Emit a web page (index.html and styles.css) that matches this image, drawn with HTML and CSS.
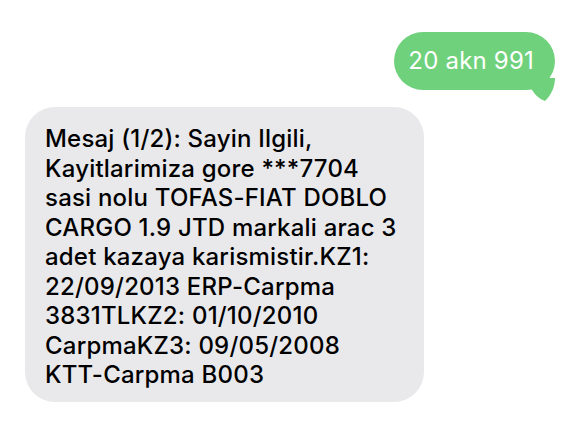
FILE: index.html
```html
<!DOCTYPE html>
<html lang="tr">
<head>
    <meta charset="UTF-8">
    <meta name="viewport" content="width=device-width, initial-scale=1.0">
    <title>Mesajlar</title>
    <link rel="stylesheet" href="styles.css">
</head>
<body>
    <div class="thread">
        <!-- giden mesaj -->
        <div class="bubble bubble-out">
            20 akn 991
            <svg class="tail" width="24" height="24" viewBox="0 0 24 24">
                <path d="M0 0 L24 0 C24 9 20 17 14 23 C8 21 3 16 0 10 Z" fill="#6fd17b"/>
            </svg>
        </div>

        <!-- gelen mesaj -->
        <div class="bubble bubble-in">Mesaj (1/2): Sayin Ilgili,<br>Kayitlarimiza gore ***7704<br>sasi nolu TOFAS-FIAT DOBLO<br>CARGO 1.9 JTD markali arac 3<br>adet kazaya karismistir.KZ1:<br>22/09/2013 ERP-Carpma<br>3831TLKZ2: 01/10/2010<br>CarpmaKZ3: 09/05/2008<br>KTT-Carpma B003</div>
    </div>
</body>
</html>
```

FILE: styles.css
```css
body {
    margin: 0;
    background-color: #ffffff;
    font-family: Inter, "Noto Sans", sans-serif;
}

.thread {
    display: flex;
    flex-direction: column;
    padding: 32px 25px 0 25px;
    gap: 17px;
}

.bubble {
    position: relative;
    font-size: 24px;
    font-weight: 500;
    letter-spacing: 0.2px;
    line-height: 29.5px;
}

.bubble-out {
    align-self: flex-end;
    background-color: #6fd17b;
    color: #ffffff;
    font-weight: 400;
    border-radius: 29px;
    padding: 14px 21px 14.5px 14px;
}

/* kuyruk balonun sağ alt köşesinden aşağı sarkar */
.tail {
    position: absolute;
    right: 0;
    bottom: -12px;
    z-index: -1;
}

.bubble-in {
    align-self: flex-start;
    width: 359px;
    background-color: #e9e9eb;
    color: #000000;
    border-radius: 30px;
    padding: 17px 20px 12px 20px;
    white-space: nowrap;
}
```
